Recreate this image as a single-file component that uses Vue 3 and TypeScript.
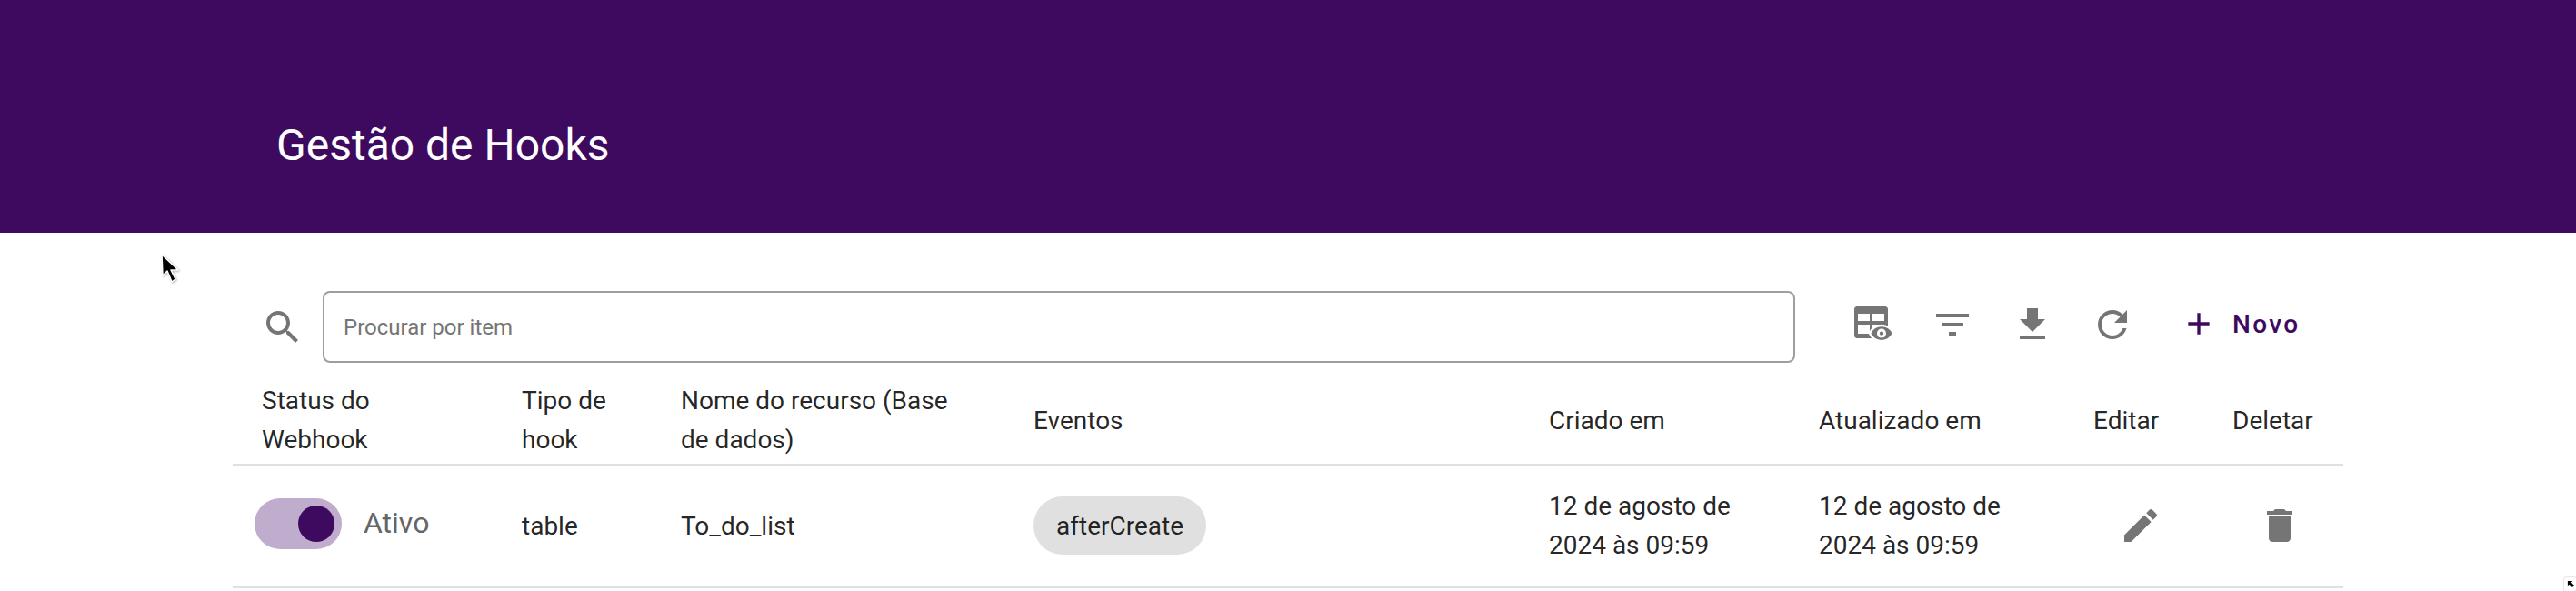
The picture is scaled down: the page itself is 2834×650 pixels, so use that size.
<script setup lang="ts">
interface Col { label: string; cls: string }
const columns: Col[] = [
  { label: 'Status do Webhook', cls: 'c-status' },
  { label: 'Tipo de hook', cls: 'c-type' },
  { label: 'Nome do recurso (Base de dados)', cls: 'c-name' },
  { label: 'Eventos', cls: 'c-events' },
  { label: 'Criado em', cls: 'c-created' },
  { label: 'Atualizado em', cls: 'c-updated' },
  { label: 'Editar', cls: 'c-edit' },
  { label: 'Deletar', cls: 'c-delete' },
]
const dateText = '12 de agosto de 2024 às 09:59'
</script>

<template>
  <div class="page">
    <header class="banner">
      <h1 class="title">Gestão de Hooks</h1>
    </header>

    <section class="toolbar">
      <svg class="icon search" viewBox="0 0 24 24"><path d="M15.5 14h-.79l-.28-.27C15.41 12.59 16 11.11 16 9.5 16 5.91 13.09 3 9.5 3S3 5.91 3 9.5 5.91 16 9.5 16c1.61 0 3.09-.59 4.23-1.57l.27.28v.79l5 4.99L20.49 19l-4.99-5zm-6 0C7.01 14 5 11.99 5 9.5S7.01 5 9.5 5 14 7.01 14 9.5 11.99 14 9.5 14z" /></svg>
      <input class="search-input" type="text" placeholder="Procurar por item" />
      <div class="actions">
        <button class="icon-btn" type="button">
          <svg class="icon" viewBox="0 0 24 24">
            <path fill-rule="evenodd" d="M3.5 2h15.500c.8 0 1.500.7 1.500 1.500V18c0 .8-.7 1.500-1.500 1.500H3.500c-.8 0-1.500-.7-1.500-1.500V3.500C2 2.700 2.700 2 3.500 2zM4 6v4h6.500V6H4zM12 6v4h6.500V6H12zM4 12v5h6.500v-5H4zM12 12v5h6.500v-5H12z" />
            <path d="M17 12.500c-2.900 0-5.400 1.800-6.500 4.300 1.100 2.500 3.600 4.300 6.500 4.300s5.400-1.800 6.500-4.300c-1.100-2.500-3.600-4.300-6.500-4.300z" stroke="#fff" stroke-width="1.300" />
            <circle cx="17" cy="16.800" r="2.500" fill="#fff" />
            <circle cx="17" cy="16.800" r="1.100" />
          </svg>
        </button>
        <button class="icon-btn" type="button">
          <svg class="icon" viewBox="0 0 24 24"><path d="M10 18h4v-2h-4v2zM3 6v2h18V6H3zm3 7h12v-2H6v2z" /></svg>
        </button>
        <button class="icon-btn" type="button">
          <svg class="icon" viewBox="0 0 24 24"><path d="M19 9h-4V3H9v6H5l7 7 7-7zM5 18v2h14v-2H5z" /></svg>
        </button>
        <button class="icon-btn" type="button">
          <svg class="icon" viewBox="0 0 24 24"><path d="M17.65 6.35C16.2 4.9 14.21 4 12 4c-4.42 0-7.99 3.58-7.99 8s3.57 8 7.99 8c3.73 0 6.84-2.55 7.73-6h-2.08c-.82 2.33-3.04 4-5.65 4-3.31 0-6-2.69-6-6s2.69-6 6-6c1.66 0 3.14.69 4.22 1.78L13 11h7V4l-2.35 2.35z" /></svg>
        </button>
        <button class="new-btn" type="button">
          <svg class="plus" viewBox="0 0 24 24"><path d="M19 13h-6v6h-2v-6H5v-2h6V5h2v6h6v2z" /></svg>
          <span>Novo</span>
        </button>
      </div>
    </section>

    <table class="grid">
      <thead>
        <tr>
          <th v-for="col in columns" :key="col.label" :class="col.cls">{{ col.label }}</th>
        </tr>
      </thead>
      <tbody>
        <tr>
          <td class="status-cell">
            <div class="status">
              <span class="track"><span class="thumb"></span></span>
              <span class="status-label">Ativo</span>
            </div>
          </td>
          <td>table</td>
          <td>To_do_list</td>
          <td class="events-cell"><span class="chip">afterCreate</span></td>
          <td>{{ dateText }}</td>
          <td>{{ dateText }}</td>
          <td class="icon-cell">
            <svg class="icon" viewBox="0 0 24 24"><path d="M3 17.25V21h3.75L17.81 9.94l-3.75-3.75L3 17.25zM20.71 7.04c.39-.39.39-1.02 0-1.41l-2.34-2.34c-.39-.39-1.02-.39-1.41 0l-1.83 1.83 3.75 3.75 1.83-1.83z" /></svg>
          </td>
          <td class="icon-cell">
            <svg class="icon" viewBox="0 0 24 24"><path d="M6 19c0 1.1.9 2 2 2h8c1.1 0 2-.9 2-2V7H6v12zM19 4h-3.5l-1-1h-5l-1 1H5v2h14V4z" /></svg>
          </td>
        </tr>
      </tbody>
    </table>

    <svg class="cursor cursor-main" viewBox="0 0 24 36">
      <path d="M3 2l1 23 5-5 5 12 4-3-5-10h8z" fill="#000" stroke="#fff" stroke-width="1.500" stroke-linejoin="round" />
    </svg>
    <div class="cursor-corner">
      <svg class="corner-arrow" viewBox="0 0 10 10"><path d="M1 1h6L5.200 2.800 9 6.600 6.600 9 2.800 5.200 1 7z" fill="#000" /></svg>
    </div>
  </div>
</template>

<style scoped>
.page {
  position: relative;
  width: 2834px;
  height: 650px;
  overflow: hidden;
  background: #fff;
  font-family: Roboto, "Liberation Sans", sans-serif;
  color: rgba(0, 0, 0, 0.87);
}

.banner {
  box-sizing: border-box;
  height: 256px;
  padding: 64px 0 0 304px;
  display: flex;
  align-items: center;
  background: #3e0a5f;
}

.title {
  margin: 0;
  font-size: 48px;
  font-weight: 400;
  line-height: 64px;
  color: #fff;
}

.toolbar {
  display: flex;
  align-items: center;
  margin-top: 64px;
  padding-left: 287px;
  height: 79px;
}

.icon {
  display: block;
  width: 48px;
  height: 48px;
  fill: #757575;
}

.search-input {
  box-sizing: border-box;
  width: 1620px;
  height: 79px;
  margin-left: 20px;
  padding: 0 21px;
  border: 2px solid #9e9e9e;
  border-radius: 8px;
  outline: none;
  font-family: inherit;
  font-size: 24px;
  color: #333;
  background: #fff;
}

.search-input::placeholder {
  color: #757575;
  opacity: 1;
}

.actions {
  display: flex;
  align-items: center;
  margin-left: 41px;
  padding-bottom: 5px;
}

.icon-btn {
  width: 88px;
  height: 88px;
  padding: 20px;
  border: 0;
  background: none;
}

.new-btn {
  display: flex;
  align-items: center;
  gap: 17px;
  margin-left: 31px;
  padding: 0 0 2px;
  border: 0;
  background: none;
  font-family: inherit;
  font-size: 28px;
  font-weight: 500;
  letter-spacing: 2.3px;
  color: #3e0a5f;
}

.plus {
  display: block;
  width: 40px;
  height: 40px;
  fill: #3e0a5f;
}

.grid {
  width: 2322px;
  margin: 14px 0 0 256px;
  border-collapse: collapse;
  table-layout: fixed;
  font-size: 28px;
  line-height: 43px;
}

.grid th,
.grid td {
  box-sizing: border-box;
  padding: 4px 33px 4px 32px;
  text-align: left;
  font-weight: 400;
  border-bottom: 3px solid #e0e0e0;
}

.grid thead th {
  height: 98px;
  padding-top: 5px;
  padding-bottom: 3px;
}

.grid tbody td {
  height: 134px;
}

.c-status { width: 286px; }
.c-type { width: 175px; }
.c-name { width: 387px; }
.c-events { width: 568px; }
.c-created { width: 297px; }
.c-updated { width: 302px; }
.c-edit { width: 153px; }
.c-delete { width: 154px; }

.grid .c-events,
.grid .events-cell {
  padding-left: 33px;
}

.grid .status-cell {
  padding: 0 0 5px 24px;
}

.status {
  display: flex;
  align-items: center;
  gap: 24px;
}

.track {
  display: flex;
  align-items: center;
  justify-content: flex-end;
  box-sizing: border-box;
  width: 96px;
  height: 56px;
  padding-right: 8px;
  border-radius: 28px;
  background: #c0adcd;
}

.thumb {
  width: 40px;
  height: 40px;
  border-radius: 50%;
  background: #3e0a5f;
}

.status-label {
  font-size: 32px;
  color: #666;
}

.chip {
  display: inline-flex;
  align-items: center;
  height: 64px;
  padding: 0 25px;
  border-radius: 32px;
  background: #e0e0e0;
}

.grid .icon-cell {
  padding: 0 0 0 60px;
}

.cursor {
  position: absolute;
  display: block;
}

.cursor-main {
  left: 175px;
  top: 278px;
  width: 24px;
  height: 36px;
  filter: drop-shadow(1px 1px 1px rgba(0, 0, 0, 0.3));
}

.cursor-corner {
  position: absolute;
  left: 2821px;
  top: 635px;
  box-sizing: border-box;
  width: 13px;
  height: 15px;
  padding: 3px 0 0 3px;
  border-radius: 2px;
  background: #fff;
  box-shadow: 0 0 2px rgba(0, 0, 0, 0.35);
}

.corner-arrow {
  display: block;
  width: 9px;
  height: 9px;
}
</style>

<style>
html,
body {
  margin: 0;
  background: #fff;
}
</style>
